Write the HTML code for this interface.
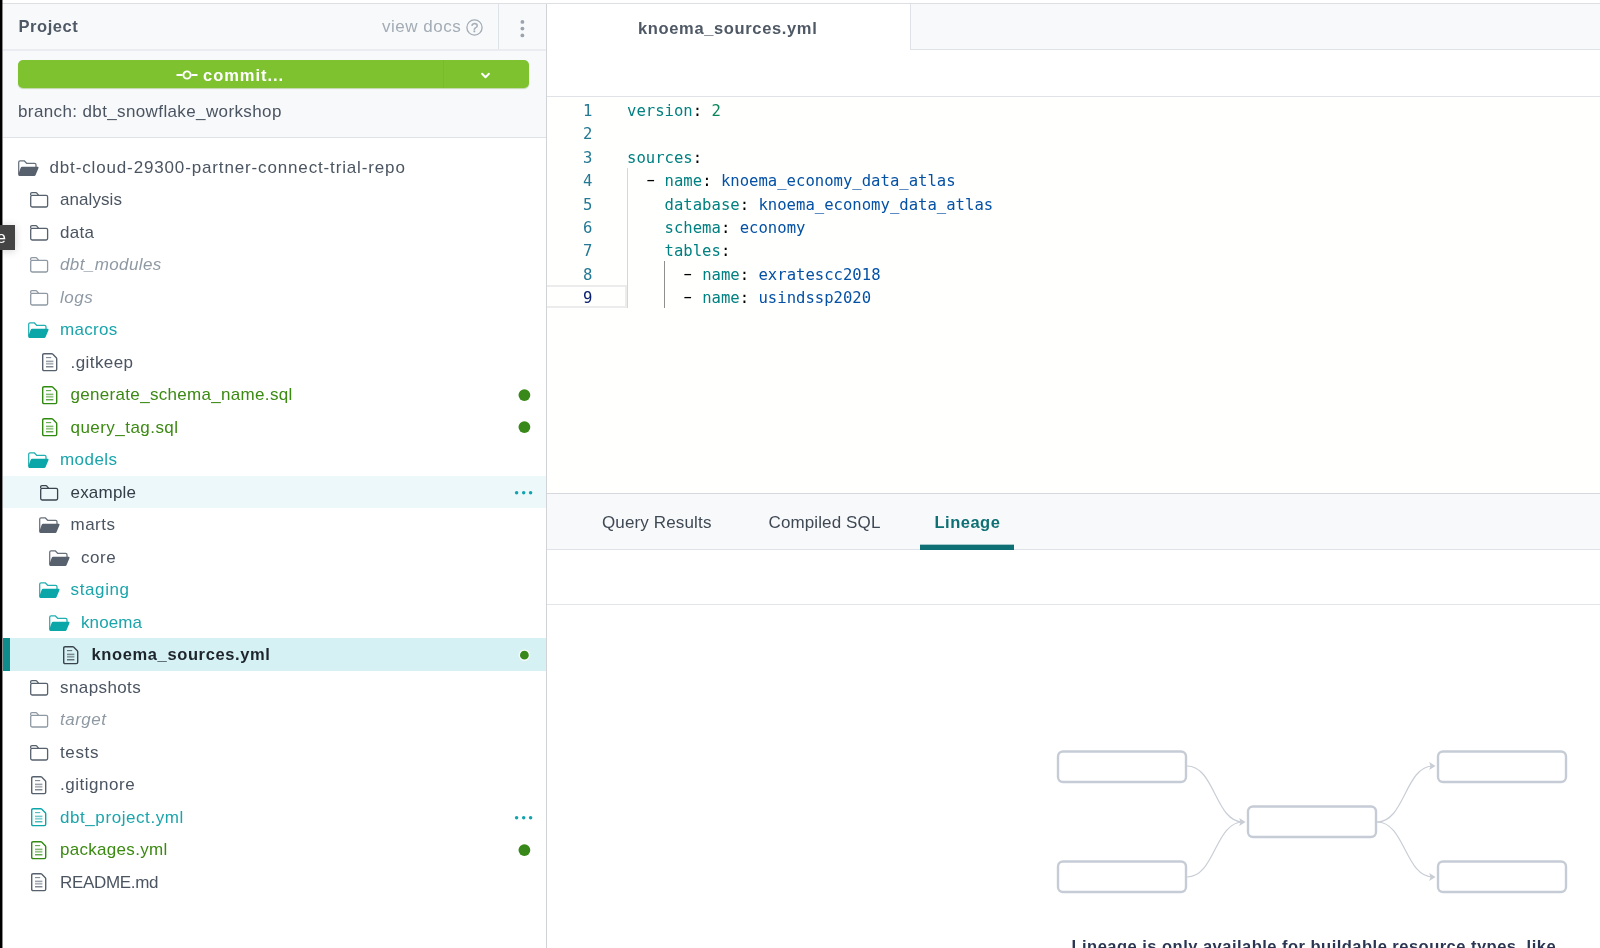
<!DOCTYPE html>
<html><head><meta charset="utf-8"><title>dbt Cloud IDE</title>
<style>
html,body{margin:0;padding:0}
body{width:1600px;height:948px;overflow:hidden;position:relative;background:#fff;font-family:"Liberation Sans",sans-serif;}
div,svg{box-sizing:border-box}
#app{position:absolute;left:0;top:0;width:1600px;height:948px;overflow:hidden;will-change:transform}
.abs{position:absolute}
.ic{position:absolute;display:block;overflow:visible}
.lbl{position:absolute;height:32.5px;line-height:32.5px;font-size:17px;white-space:nowrap}
.lbl.it{font-style:italic}
.lbl.b{font-weight:bold;font-size:16.5px}
.rowbg{position:absolute;left:3px;width:543px;height:32.5px}
.dot{position:absolute;border-radius:50%;background:#38881a}
.d3{position:absolute;left:514.5px;width:20px;height:4px}
.d3 i{position:absolute;top:0;width:3.5px;height:3.5px;border-radius:50%;background:#12a3ae}
.d3 i:nth-child(1){left:0}.d3 i:nth-child(2){left:7px}.d3 i:nth-child(3){left:14px}
.ln,.cl{position:absolute;font-family:"DejaVu Sans Mono","Liberation Mono",monospace;font-size:15.6px;line-height:23.4px;height:23.4px;white-space:pre}
.hy{display:inline-block;transform:scaleX(1.7);position:relative;top:-1px}
.ln{left:547px;width:45.5px;text-align:right}
.cl{left:627px;color:#000}
.tab{position:absolute;top:495px;height:55px;line-height:55px;font-size:17px;color:#3f4954;white-space:nowrap}
</style></head>
<body>
<div id="app">
<!-- top strip -->
<div class="abs" style="left:0;top:0;width:1600px;height:3px;background:#fff"></div>
<div class="abs" style="left:0;top:3px;width:1600px;height:1px;background:#dedfe3"></div>

<!-- sidebar header -->
<div class="abs" style="left:3px;top:4px;width:543px;height:134px;background:#f8f9fb"></div>
<div class="abs" style="left:3px;top:49px;width:543px;height:2px;background:#eaecf1"></div>
<div class="abs" style="left:498px;top:4px;width:1px;height:45px;background:#dfe2e7"></div>
<div class="abs" style="left:3px;top:137px;width:543px;height:1px;background:#dfe2e7"></div>
<div class="abs" style="left:18.5px;top:4px;height:45px;line-height:45px;font-size:16.5px;font-weight:bold;color:#4f5965;letter-spacing:.55px">Project</div>
<div class="abs" style="left:382px;top:4px;height:45px;line-height:45px;font-size:17px;color:#a3acb5;letter-spacing:.52px">view docs</div>
<svg class="ic" style="left:466px;top:18.5px" width="17" height="17" viewBox="0 0 17 17"><circle cx="8.5" cy="8.5" r="7.6" fill="none" stroke="#a3acb5" stroke-width="1.3"/><text x="8.5" y="13.1" text-anchor="middle" font-family="Liberation Sans, sans-serif" font-size="13" stroke="#a3acb5" stroke-width=".35" fill="#a3acb5">?</text></svg>
<svg class="ic" style="left:519px;top:18px" width="6" height="22" viewBox="0 0 6 22"><circle cx="3.4" cy="3.9" r="1.9" fill="#9ba3ad"/><circle cx="3.4" cy="10.6" r="1.9" fill="#9ba3ad"/><circle cx="3.4" cy="17.4" r="1.9" fill="#9ba3ad"/></svg>

<!-- commit button -->
<div class="abs" style="left:18px;top:60px;width:511px;height:28px;border-radius:5px;background:#7ec230;box-shadow:0 1px 1px rgba(90,150,20,.35)"></div>
<div class="abs" style="left:443px;top:60px;width:1px;height:28px;background:#78bb2c"></div>
<svg class="ic" style="left:176px;top:68.5px" width="22" height="12" viewBox="0 0 22 12"><path d="M0.5 6H6.6M15.4 6H21.5" stroke="#fff" stroke-width="1.8"/><circle cx="11" cy="6" r="3.6" fill="none" stroke="#fff" stroke-width="1.9"/></svg>
<div class="abs" style="left:203px;top:61px;height:28px;line-height:28px;font-size:16.5px;font-weight:bold;color:#fff;letter-spacing:.97px">commit...</div>
<svg class="ic" style="left:480.3px;top:72.3px" width="11" height="8" viewBox="0 0 11 8"><path d="M2.1 1.8L5.5 5.2L8.9 1.8" fill="none" stroke="#fff" stroke-width="2" stroke-linecap="round" stroke-linejoin="round"/></svg>
<div class="abs" style="left:18px;top:99px;height:26px;line-height:26px;font-size:17px;color:#4b5561;letter-spacing:.38px">branch: dbt_snowflake_workshop</div>

<!-- tree -->
<svg class="ic" style="left:17.6px;top:159.5px" width="21" height="16" viewBox="0 0 21 16"><path d="M0.7 14.6V2.2Q0.7 0.8 2.1 0.8H6.2L8.6 3.3H16.6Q18 3.3 18 4.7V7" fill="none" stroke="#56616d" stroke-width="1.25" stroke-opacity=".9" stroke-linejoin="round"/><path d="M4.2 6.8H19.6Q21 6.8 20.4 8.2L17.6 15Q17.2 15.9 16.2 15.9H1.4Q0 15.9 0.3 14.6L2.6 8Q3 6.8 4.2 6.8Z" fill="#56616d"/></svg>
<div class="lbl" style="left:49.5px;top:151.75px;color:#4b5561;letter-spacing:0.854px;">dbt-cloud-29300-partner-connect-trial-repo</div>
<svg class="ic" style="left:29.8px;top:192.3px" width="19" height="16" viewBox="0 0 19 16"><path d="M0.7 3.3V1.9Q0.7 0.7 1.9 0.7H5.8Q6.6 0.7 7.1 1.4L8.6 3.3" fill="none" stroke="#56616d" stroke-width="1.3" stroke-linejoin="round"/><rect x="0.7" y="3.3" width="16.9" height="11.7" rx="1.4" fill="none" stroke="#56616d" stroke-width="1.3"/></svg>
<div class="lbl" style="left:60px;top:184.25px;color:#4b5561;letter-spacing:0.071px;">analysis</div>
<svg class="ic" style="left:29.8px;top:224.8px" width="19" height="16" viewBox="0 0 19 16"><path d="M0.7 3.3V1.9Q0.7 0.7 1.9 0.7H5.8Q6.6 0.7 7.1 1.4L8.6 3.3" fill="none" stroke="#56616d" stroke-width="1.3" stroke-linejoin="round"/><rect x="0.7" y="3.3" width="16.9" height="11.7" rx="1.4" fill="none" stroke="#56616d" stroke-width="1.3"/></svg>
<div class="lbl" style="left:60px;top:216.75px;color:#4b5561;letter-spacing:0.249px;">data</div>
<svg class="ic" style="left:29.8px;top:257.3px" width="19" height="16" viewBox="0 0 19 16"><path d="M0.7 3.3V1.9Q0.7 0.7 1.9 0.7H5.8Q6.6 0.7 7.1 1.4L8.6 3.3" fill="none" stroke="#8e99a4" stroke-width="1.3" stroke-linejoin="round"/><rect x="0.7" y="3.3" width="16.9" height="11.7" rx="1.4" fill="none" stroke="#8e99a4" stroke-width="1.3"/></svg>
<div class="lbl it" style="left:60px;top:249.25px;color:#8e99a4;letter-spacing:0.4px;">dbt_modules</div>
<svg class="ic" style="left:29.8px;top:289.8px" width="19" height="16" viewBox="0 0 19 16"><path d="M0.7 3.3V1.9Q0.7 0.7 1.9 0.7H5.8Q6.6 0.7 7.1 1.4L8.6 3.3" fill="none" stroke="#8e99a4" stroke-width="1.3" stroke-linejoin="round"/><rect x="0.7" y="3.3" width="16.9" height="11.7" rx="1.4" fill="none" stroke="#8e99a4" stroke-width="1.3"/></svg>
<div class="lbl it" style="left:60px;top:281.75px;color:#8e99a4;letter-spacing:0.5px;">logs</div>
<svg class="ic" style="left:28.1px;top:322.0px" width="21" height="16" viewBox="0 0 21 16"><path d="M0.7 14.6V2.2Q0.7 0.8 2.1 0.8H6.2L8.6 3.3H16.6Q18 3.3 18 4.7V7" fill="none" stroke="#0aa6a8" stroke-width="1.25" stroke-opacity=".9" stroke-linejoin="round"/><path d="M4.2 6.8H19.6Q21 6.8 20.4 8.2L17.6 15Q17.2 15.9 16.2 15.9H1.4Q0 15.9 0.3 14.6L2.6 8Q3 6.8 4.2 6.8Z" fill="#0aa6a8"/></svg>
<div class="lbl" style="left:60px;top:314.25px;color:#1aa5ab;letter-spacing:0.3px;">macros</div>
<svg class="ic" style="left:41.9px;top:353.3px" width="16" height="19" viewBox="0 0 16 19"><path d="M2.1 0.7H9.6Q10.2 0.7 10.6 1.1L14.3 4.8Q14.7 5.2 14.7 5.8V16.2Q14.7 17.6 13.3 17.6H2.1Q0.7 17.6 0.7 16.2V2.1Q0.7 0.7 2.1 0.7Z" fill="none" stroke="#56616d" stroke-width="1.4"/><path d="M4 4.6H9.2" stroke="#56616d" stroke-width="1.1" opacity=".75"/><path d="M4 8.4H11.4" stroke="#56616d" stroke-width="1.6" opacity=".6"/><path d="M4 10.9H11.4" stroke="#56616d" stroke-width="1" opacity=".8"/><path d="M4 13.8H11.4" stroke="#56616d" stroke-width="1.1"/></svg>
<div class="lbl" style="left:70.5px;top:346.75px;color:#4b5561;letter-spacing:0.429px;">.gitkeep</div>
<svg class="ic" style="left:41.9px;top:385.8px" width="16" height="19" viewBox="0 0 16 19"><path d="M2.1 0.7H9.6Q10.2 0.7 10.6 1.1L14.3 4.8Q14.7 5.2 14.7 5.8V16.2Q14.7 17.6 13.3 17.6H2.1Q0.7 17.6 0.7 16.2V2.1Q0.7 0.7 2.1 0.7Z" fill="none" stroke="#2f8a0f" stroke-width="1.4"/><path d="M4 4.6H9.2" stroke="#2f8a0f" stroke-width="1.1" opacity=".75"/><path d="M4 8.4H11.4" stroke="#2f8a0f" stroke-width="1.6" opacity=".6"/><path d="M4 10.9H11.4" stroke="#2f8a0f" stroke-width="1" opacity=".8"/><path d="M4 13.8H11.4" stroke="#2f8a0f" stroke-width="1.1"/></svg>
<div class="lbl" style="left:70.5px;top:379.25px;color:#3b8a12;letter-spacing:0.315px;">generate_schema_name.sql</div>
<svg class="ic" style="left:517px;top:386.5px" width="16" height="16" viewBox="0 0 16 16"><circle cx="7.4" cy="8.1" r="5.9" fill="#38881a"/></svg>
<svg class="ic" style="left:41.9px;top:418.3px" width="16" height="19" viewBox="0 0 16 19"><path d="M2.1 0.7H9.6Q10.2 0.7 10.6 1.1L14.3 4.8Q14.7 5.2 14.7 5.8V16.2Q14.7 17.6 13.3 17.6H2.1Q0.7 17.6 0.7 16.2V2.1Q0.7 0.7 2.1 0.7Z" fill="none" stroke="#2f8a0f" stroke-width="1.4"/><path d="M4 4.6H9.2" stroke="#2f8a0f" stroke-width="1.1" opacity=".75"/><path d="M4 8.4H11.4" stroke="#2f8a0f" stroke-width="1.6" opacity=".6"/><path d="M4 10.9H11.4" stroke="#2f8a0f" stroke-width="1" opacity=".8"/><path d="M4 13.8H11.4" stroke="#2f8a0f" stroke-width="1.1"/></svg>
<div class="lbl" style="left:70.5px;top:411.75px;color:#3b8a12;letter-spacing:0.458px;">query_tag.sql</div>
<svg class="ic" style="left:517px;top:419.0px" width="16" height="16" viewBox="0 0 16 16"><circle cx="7.4" cy="8.1" r="5.9" fill="#38881a"/></svg>
<svg class="ic" style="left:28.1px;top:452.0px" width="21" height="16" viewBox="0 0 21 16"><path d="M0.7 14.6V2.2Q0.7 0.8 2.1 0.8H6.2L8.6 3.3H16.6Q18 3.3 18 4.7V7" fill="none" stroke="#0aa6a8" stroke-width="1.25" stroke-opacity=".9" stroke-linejoin="round"/><path d="M4.2 6.8H19.6Q21 6.8 20.4 8.2L17.6 15Q17.2 15.9 16.2 15.9H1.4Q0 15.9 0.3 14.6L2.6 8Q3 6.8 4.2 6.8Z" fill="#0aa6a8"/></svg>
<div class="lbl" style="left:60px;top:444.25px;color:#1aa5ab;letter-spacing:0.45px;">models</div>
<div class="rowbg" style="top:475.75px;background:#ecf8f9"></div>
<svg class="ic" style="left:40.3px;top:484.8px" width="19" height="16" viewBox="0 0 19 16"><path d="M0.7 3.3V1.9Q0.7 0.7 1.9 0.7H5.8Q6.6 0.7 7.1 1.4L8.6 3.3" fill="none" stroke="#3a434e" stroke-width="1.3" stroke-linejoin="round"/><rect x="0.7" y="3.3" width="16.9" height="11.7" rx="1.4" fill="none" stroke="#3a434e" stroke-width="1.3"/></svg>
<div class="lbl" style="left:70.5px;top:476.75px;color:#343d48;letter-spacing:0.208px;">example</div>
<svg class="ic" style="left:514px;top:489.0px" width="20" height="8" viewBox="0 0 20 8"><circle cx="2.6" cy="3.7" r="1.75" fill="#12a3ae"/><circle cx="9.7" cy="3.7" r="1.75" fill="#12a3ae"/><circle cx="16.6" cy="3.7" r="1.75" fill="#12a3ae"/></svg>
<svg class="ic" style="left:38.6px;top:517.0px" width="21" height="16" viewBox="0 0 21 16"><path d="M0.7 14.6V2.2Q0.7 0.8 2.1 0.8H6.2L8.6 3.3H16.6Q18 3.3 18 4.7V7" fill="none" stroke="#56616d" stroke-width="1.25" stroke-opacity=".9" stroke-linejoin="round"/><path d="M4.2 6.8H19.6Q21 6.8 20.4 8.2L17.6 15Q17.2 15.9 16.2 15.9H1.4Q0 15.9 0.3 14.6L2.6 8Q3 6.8 4.2 6.8Z" fill="#56616d"/></svg>
<div class="lbl" style="left:70.5px;top:509.25px;color:#4b5561;letter-spacing:0.5px;">marts</div>
<svg class="ic" style="left:49.1px;top:549.5px" width="21" height="16" viewBox="0 0 21 16"><path d="M0.7 14.6V2.2Q0.7 0.8 2.1 0.8H6.2L8.6 3.3H16.6Q18 3.3 18 4.7V7" fill="none" stroke="#56616d" stroke-width="1.25" stroke-opacity=".9" stroke-linejoin="round"/><path d="M4.2 6.8H19.6Q21 6.8 20.4 8.2L17.6 15Q17.2 15.9 16.2 15.9H1.4Q0 15.9 0.3 14.6L2.6 8Q3 6.8 4.2 6.8Z" fill="#56616d"/></svg>
<div class="lbl" style="left:81px;top:541.75px;color:#4b5561;letter-spacing:0.583px;">core</div>
<svg class="ic" style="left:38.6px;top:582.0px" width="21" height="16" viewBox="0 0 21 16"><path d="M0.7 14.6V2.2Q0.7 0.8 2.1 0.8H6.2L8.6 3.3H16.6Q18 3.3 18 4.7V7" fill="none" stroke="#0aa6a8" stroke-width="1.25" stroke-opacity=".9" stroke-linejoin="round"/><path d="M4.2 6.8H19.6Q21 6.8 20.4 8.2L17.6 15Q17.2 15.9 16.2 15.9H1.4Q0 15.9 0.3 14.6L2.6 8Q3 6.8 4.2 6.8Z" fill="#0aa6a8"/></svg>
<div class="lbl" style="left:70.5px;top:574.25px;color:#1aa5ab;letter-spacing:0.626px;">staging</div>
<svg class="ic" style="left:49.1px;top:614.5px" width="21" height="16" viewBox="0 0 21 16"><path d="M0.7 14.6V2.2Q0.7 0.8 2.1 0.8H6.2L8.6 3.3H16.6Q18 3.3 18 4.7V7" fill="none" stroke="#0aa6a8" stroke-width="1.25" stroke-opacity=".9" stroke-linejoin="round"/><path d="M4.2 6.8H19.6Q21 6.8 20.4 8.2L17.6 15Q17.2 15.9 16.2 15.9H1.4Q0 15.9 0.3 14.6L2.6 8Q3 6.8 4.2 6.8Z" fill="#0aa6a8"/></svg>
<div class="lbl" style="left:81px;top:606.75px;color:#1aa5ab;letter-spacing:0.1px;">knoema</div>
<div class="rowbg" style="top:638.25px;background:#d6f1f3"></div><div style="position:absolute;left:3px;top:638.25px;width:7px;height:32.5px;background:#0e8b8b"></div>
<svg class="ic" style="left:62.9px;top:645.8px" width="16" height="19" viewBox="0 0 16 19"><path d="M2.1 0.7H9.6Q10.2 0.7 10.6 1.1L14.3 4.8Q14.7 5.2 14.7 5.8V16.2Q14.7 17.6 13.3 17.6H2.1Q0.7 17.6 0.7 16.2V2.1Q0.7 0.7 2.1 0.7Z" fill="none" stroke="#3a434e" stroke-width="1.4"/><path d="M4 4.6H9.2" stroke="#3a434e" stroke-width="1.1" opacity=".75"/><path d="M4 8.4H11.4" stroke="#3a434e" stroke-width="1.6" opacity=".6"/><path d="M4 10.9H11.4" stroke="#3a434e" stroke-width="1" opacity=".8"/><path d="M4 13.8H11.4" stroke="#3a434e" stroke-width="1.1"/></svg>
<div class="lbl b" style="left:91.5px;top:638.25px;color:#1d242c;letter-spacing:0.624px;">knoema_sources.yml</div>
<svg class="ic" style="left:517px;top:647.5px" width="15" height="15" viewBox="0 0 15 15"><circle cx="7.4" cy="7.2" r="5.1" fill="#38881a" stroke="#fafefe" stroke-width="1.4"/></svg>
<svg class="ic" style="left:29.8px;top:679.8px" width="19" height="16" viewBox="0 0 19 16"><path d="M0.7 3.3V1.9Q0.7 0.7 1.9 0.7H5.8Q6.6 0.7 7.1 1.4L8.6 3.3" fill="none" stroke="#56616d" stroke-width="1.3" stroke-linejoin="round"/><rect x="0.7" y="3.3" width="16.9" height="11.7" rx="1.4" fill="none" stroke="#56616d" stroke-width="1.3"/></svg>
<div class="lbl" style="left:60px;top:671.75px;color:#4b5561;letter-spacing:0.407px;">snapshots</div>
<svg class="ic" style="left:29.8px;top:712.3px" width="19" height="16" viewBox="0 0 19 16"><path d="M0.7 3.3V1.9Q0.7 0.7 1.9 0.7H5.8Q6.6 0.7 7.1 1.4L8.6 3.3" fill="none" stroke="#8e99a4" stroke-width="1.3" stroke-linejoin="round"/><rect x="0.7" y="3.3" width="16.9" height="11.7" rx="1.4" fill="none" stroke="#8e99a4" stroke-width="1.3"/></svg>
<div class="lbl it" style="left:60px;top:704.25px;color:#8e99a4;letter-spacing:0.5px;">target</div>
<svg class="ic" style="left:29.8px;top:744.8px" width="19" height="16" viewBox="0 0 19 16"><path d="M0.7 3.3V1.9Q0.7 0.7 1.9 0.7H5.8Q6.6 0.7 7.1 1.4L8.6 3.3" fill="none" stroke="#56616d" stroke-width="1.3" stroke-linejoin="round"/><rect x="0.7" y="3.3" width="16.9" height="11.7" rx="1.4" fill="none" stroke="#56616d" stroke-width="1.3"/></svg>
<div class="lbl" style="left:60px;top:736.75px;color:#4b5561;letter-spacing:0.625px;">tests</div>
<svg class="ic" style="left:31.4px;top:775.8px" width="16" height="19" viewBox="0 0 16 19"><path d="M2.1 0.7H9.6Q10.2 0.7 10.6 1.1L14.3 4.8Q14.7 5.2 14.7 5.8V16.2Q14.7 17.6 13.3 17.6H2.1Q0.7 17.6 0.7 16.2V2.1Q0.7 0.7 2.1 0.7Z" fill="none" stroke="#56616d" stroke-width="1.4"/><path d="M4 4.6H9.2" stroke="#56616d" stroke-width="1.1" opacity=".75"/><path d="M4 8.4H11.4" stroke="#56616d" stroke-width="1.6" opacity=".6"/><path d="M4 10.9H11.4" stroke="#56616d" stroke-width="1" opacity=".8"/><path d="M4 13.8H11.4" stroke="#56616d" stroke-width="1.1"/></svg>
<div class="lbl" style="left:60px;top:769.25px;color:#4b5561;letter-spacing:0.528px;">.gitignore</div>
<svg class="ic" style="left:31.4px;top:808.3px" width="16" height="19" viewBox="0 0 16 19"><path d="M2.1 0.7H9.6Q10.2 0.7 10.6 1.1L14.3 4.8Q14.7 5.2 14.7 5.8V16.2Q14.7 17.6 13.3 17.6H2.1Q0.7 17.6 0.7 16.2V2.1Q0.7 0.7 2.1 0.7Z" fill="none" stroke="#0aa6a8" stroke-width="1.4"/><path d="M4 4.6H9.2" stroke="#0aa6a8" stroke-width="1.1" opacity=".75"/><path d="M4 8.4H11.4" stroke="#0aa6a8" stroke-width="1.6" opacity=".6"/><path d="M4 10.9H11.4" stroke="#0aa6a8" stroke-width="1" opacity=".8"/><path d="M4 13.8H11.4" stroke="#0aa6a8" stroke-width="1.1"/></svg>
<div class="lbl" style="left:60px;top:801.75px;color:#1aa5ab;letter-spacing:0.571px;">dbt_project.yml</div>
<svg class="ic" style="left:514px;top:814.0px" width="20" height="8" viewBox="0 0 20 8"><circle cx="2.6" cy="3.7" r="1.75" fill="#12a3ae"/><circle cx="9.7" cy="3.7" r="1.75" fill="#12a3ae"/><circle cx="16.6" cy="3.7" r="1.75" fill="#12a3ae"/></svg>
<svg class="ic" style="left:31.4px;top:840.8px" width="16" height="19" viewBox="0 0 16 19"><path d="M2.1 0.7H9.6Q10.2 0.7 10.6 1.1L14.3 4.8Q14.7 5.2 14.7 5.8V16.2Q14.7 17.6 13.3 17.6H2.1Q0.7 17.6 0.7 16.2V2.1Q0.7 0.7 2.1 0.7Z" fill="none" stroke="#2f8a0f" stroke-width="1.4"/><path d="M4 4.6H9.2" stroke="#2f8a0f" stroke-width="1.1" opacity=".75"/><path d="M4 8.4H11.4" stroke="#2f8a0f" stroke-width="1.6" opacity=".6"/><path d="M4 10.9H11.4" stroke="#2f8a0f" stroke-width="1" opacity=".8"/><path d="M4 13.8H11.4" stroke="#2f8a0f" stroke-width="1.1"/></svg>
<div class="lbl" style="left:60px;top:834.25px;color:#3b8a12;letter-spacing:0.295px;">packages.yml</div>
<svg class="ic" style="left:517px;top:841.5px" width="16" height="16" viewBox="0 0 16 16"><circle cx="7.4" cy="8.1" r="5.9" fill="#38881a"/></svg>
<svg class="ic" style="left:31.4px;top:873.3px" width="16" height="19" viewBox="0 0 16 19"><path d="M2.1 0.7H9.6Q10.2 0.7 10.6 1.1L14.3 4.8Q14.7 5.2 14.7 5.8V16.2Q14.7 17.6 13.3 17.6H2.1Q0.7 17.6 0.7 16.2V2.1Q0.7 0.7 2.1 0.7Z" fill="none" stroke="#56616d" stroke-width="1.4"/><path d="M4 4.6H9.2" stroke="#56616d" stroke-width="1.1" opacity=".75"/><path d="M4 8.4H11.4" stroke="#56616d" stroke-width="1.6" opacity=".6"/><path d="M4 10.9H11.4" stroke="#56616d" stroke-width="1" opacity=".8"/><path d="M4 13.8H11.4" stroke="#56616d" stroke-width="1.1"/></svg>
<div class="lbl" style="left:60px;top:866.75px;color:#4b5561;letter-spacing:-0.312px;">README.md</div>

<!-- sidebar right border -->
<div class="abs" style="left:546px;top:4px;width:1px;height:944px;background:#d2d3d6"></div>

<!-- black left edge -->
<div class="abs" style="left:0;top:0;width:2px;height:948px;background:#000"></div><div class="abs" style="left:2px;top:0;width:1px;height:948px;background:rgba(0,0,0,.45)"></div>

<!-- tooltip fragment -->
<div class="abs" style="left:0;top:225px;width:14.5px;height:24.5px;background:#444;box-shadow:0 1px 8px rgba(0,0,0,.18);overflow:hidden"><span style="position:absolute;left:-3.6px;top:4px;font-size:17px;color:#fff;line-height:18px">e</span></div>
<!-- editor tabs -->
<div class="abs" style="left:547px;top:4px;width:1053px;height:45px;background:#f8f9fb"></div>
<div class="abs" style="left:547px;top:4px;width:363px;height:46px;background:#fff"></div>
<div class="abs" style="left:910px;top:4px;width:1px;height:46px;background:#dfe2e7"></div>
<div class="abs" style="left:910px;top:49px;width:690px;height:1px;background:#dfe2e7"></div>
<div class="abs" style="left:638px;top:5.6px;height:45px;line-height:45px;font-size:16.5px;font-weight:bold;color:#4f5965;white-space:nowrap;letter-spacing:.64px">knoema_sources.yml</div>
<div class="abs" style="left:547px;top:96px;width:1053px;height:1px;background:#dfe2e7"></div>

<!-- editor -->
<div class="abs" style="left:547px;top:97px;width:1053px;height:396px;background:#fffffe"></div>
<div class="abs" style="left:547px;top:285px;width:80px;height:23px;border:2px solid #ececec;border-left:none"></div>
<div class="abs" style="left:627px;top:168px;width:1px;height:140px;background:#d6d6d6"></div>
<div class="abs" style="left:664px;top:261px;width:1px;height:47px;background:#8f8f8f"></div>
<div class="ln" style="top:100px;color:#237893">1</div><div class="cl" style="top:100px"><span style="color:#008080">version</span>: <span style="color:#098658">2</span></div>
<div class="ln" style="top:123px;color:#237893">2</div><div class="cl" style="top:123px"></div>
<div class="ln" style="top:147px;color:#237893">3</div><div class="cl" style="top:147px"><span style="color:#008080">sources</span>:</div>
<div class="ln" style="top:170px;color:#237893">4</div><div class="cl" style="top:170px">  <span class="hy">-</span> <span style="color:#008080">name</span>: <span style="color:#0451a5">knoema_economy_data_atlas</span></div>
<div class="ln" style="top:194px;color:#237893">5</div><div class="cl" style="top:194px">    <span style="color:#008080">database</span>: <span style="color:#0451a5">knoema_economy_data_atlas</span></div>
<div class="ln" style="top:217px;color:#237893">6</div><div class="cl" style="top:217px">    <span style="color:#008080">schema</span>: <span style="color:#0451a5">economy</span></div>
<div class="ln" style="top:240px;color:#237893">7</div><div class="cl" style="top:240px">    <span style="color:#008080">tables</span>:</div>
<div class="ln" style="top:264px;color:#237893">8</div><div class="cl" style="top:264px">      <span class="hy">-</span> <span style="color:#008080">name</span>: <span style="color:#0451a5">exratescc2018</span></div>
<div class="ln" style="top:287px;color:#0b216f">9</div><div class="cl" style="top:287px">      <span class="hy">-</span> <span style="color:#008080">name</span>: <span style="color:#0451a5">usindssp2020</span></div>

<!-- bottom panel -->
<div class="abs" style="left:547px;top:493px;width:1053px;height:1px;background:#d5d8dc"></div>
<div class="abs" style="left:547px;top:494px;width:1053px;height:55px;background:#f8f9fb"></div>
<div class="abs" style="left:547px;top:549px;width:1053px;height:1px;background:#dfe2e7"></div>
<div class="tab" style="left:602px;letter-spacing:.14px">Query Results</div>
<div class="tab" style="left:768.5px;letter-spacing:.12px">Compiled SQL</div>
<div class="tab" style="left:934.5px;font-weight:bold;font-size:16.5px;color:#0e7074;letter-spacing:.5px">Lineage</div>
<div class="abs" style="left:920px;top:545px;width:94px;height:5px;background:#0e7074"></div><div class="abs" style="left:920px;top:544px;width:94px;height:1px;background:#0e7074;opacity:.35"></div>
<div class="abs" style="left:547px;top:604px;width:1053px;height:1px;background:#e3e5ea"></div>

<!-- lineage graphic -->
<svg class="ic" style="left:1050px;top:740px" width="530" height="165" viewBox="1050 740 530 165">
<g fill="#fff" stroke="#c6ccd6" stroke-width="2.4">
<rect x="1058" y="751.5" width="128" height="30.5" rx="5"/>
<rect x="1058" y="861.5" width="128" height="30.5" rx="5"/>
<rect x="1248" y="806.5" width="128" height="30.5" rx="5"/>
<rect x="1438" y="751.5" width="128" height="30.5" rx="5"/>
<rect x="1438" y="861.5" width="128" height="30.5" rx="5"/>
</g>
<g fill="none" stroke="#c9ced6" stroke-width="1.2">
<path d="M1187 766C1215 766 1215 822 1243 822"/>
<path d="M1187 877C1215 877 1215 822 1243 822"/>
<path d="M1377 822C1405 822 1405 766 1433 766"/>
<path d="M1377 822C1405 822 1405 877 1433 877"/>
</g>
<g fill="#c9ced6">
<path d="M1245.6 822l-6.4-3.9 1.3 3.9-1.3 3.9z"/>
<path d="M1435.6 766l-6.4-3.9 1.3 3.9-1.3 3.9z"/>
<path d="M1435.6 877l-6.4-3.9 1.3 3.9-1.3 3.9z"/>
</g>
</svg>
<div class="abs" style="left:1071.5px;top:933.8px;height:24px;line-height:24px;font-size:16.5px;font-weight:bold;color:#2b3752;white-space:nowrap;letter-spacing:.48px">Lineage is only available for buildable resource types, like</div>
</div>
</body></html>
